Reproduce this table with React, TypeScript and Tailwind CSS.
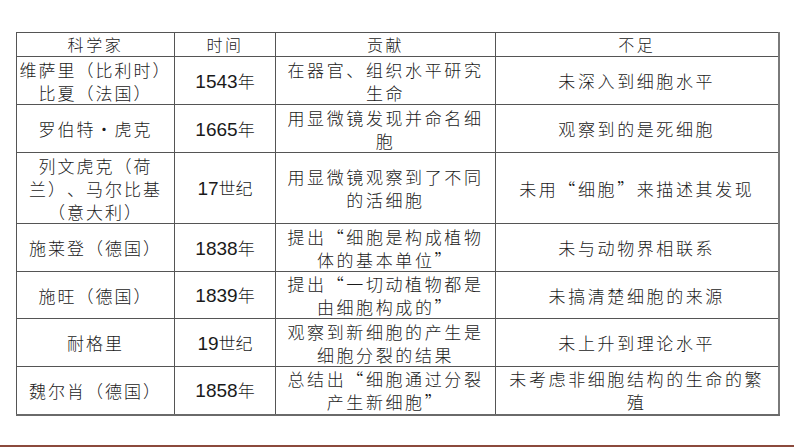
import React from "react";

type Row = {
  name: string[];
  year: [string, string];
  deed: string[];
  lack: string[];
  h: string;
};

const rows: Row[] = [
  { name: ["维萨里（比利时）", "比夏（法国）"], year: ["1543", "年"], deed: ["在器官、组织水平研究", "生命"], lack: ["未深入到细胞水平"], h: "h-[48px]" },
  { name: ["罗伯特·虎克"], year: ["1665", "年"], deed: ["用显微镜发现并命名细", "胞"], lack: ["观察到的是死细胞"], h: "h-[48px]" },
  { name: ["列文虎克（荷", "兰）、马尔比基", "（意大利）"], year: ["17", "世纪"], deed: ["用显微镜观察到了不同", "的活细胞"], lack: ["未用“细胞”来描述其发现"], h: "h-[71px]" },
  { name: ["施莱登（德国）"], year: ["1838", "年"], deed: ["提出“细胞是构成植物", "体的基本单位”"], lack: ["未与动物界相联系"], h: "h-[48px]" },
  { name: ["施旺（德国）"], year: ["1839", "年"], deed: ["提出“一切动植物都是", "由细胞构成的”"], lack: ["未搞清楚细胞的来源"], h: "h-[47px]" },
  { name: ["耐格里"], year: ["19", "世纪"], deed: ["观察到新细胞的产生是", "细胞分裂的结果"], lack: ["未上升到理论水平"], h: "h-[48px]" },
  { name: ["魏尔肖（德国）"], year: ["1858", "年"], deed: ["总结出“细胞通过分裂", "产生新细胞”"], lack: ["未考虑非细胞结构的生命的繁", "殖"], h: "h-[48px]" },
];

function Lines({ lines }: { lines: string[] }) {
  return (
    <>
      {lines.map((l, i) => (
        <div key={i} className="whitespace-nowrap">{l}</div>
      ))}
    </>
  );
}

const cell = "border border-[#555] text-center align-middle p-0 leading-[23px]";

export default function App() {
  return (
    <div className="w-[794px] h-[447px] bg-white flex flex-col text-[#1a1a1a] text-[17px] font-light tracking-[2.6px] [text-spacing-trim:space-all] font-['Noto_Sans_CJK_SC',sans-serif] overflow-hidden">
      <div className="pt-[32px] pl-[16px]">
        <table className="border-collapse table-fixed w-[762px]">
          <colgroup>
            <col className="w-[158px]" />
            <col className="w-[101px]" />
            <col className="w-[220px]" />
            <col className="w-[283px]" />
          </colgroup>
          <thead>
            <tr className="h-[24px]">
              <th className={`${cell} font-light text-[16px]`}>科学家</th>
              <th className={`${cell} font-light text-[16px]`}>时间</th>
              <th className={`${cell} font-light text-[16px]`}>贡献</th>
              <th className={`${cell} font-light text-[16px] border-r-2 border-r-[#7a7a7a]`}>不足</th>
            </tr>
          </thead>
          <tbody>
            {rows.map((r, i) => {
              const last = i === rows.length - 1;
              const bottom = last ? "border-b-2 border-b-[#6a6a6a]" : "";
              return (
                <tr key={i} className={r.h}>
                  <td className={`${cell} ${bottom} tracking-[2px]`}>
                    <Lines lines={r.name} />
                  </td>
                  <td className={`${cell} ${bottom}`}>
                    <span className="font-['Liberation_Sans','Noto_Sans_CJK_SC',sans-serif] font-normal text-[19px] tracking-normal">
                      {r.year[0]}
                    </span>
                    <span className="text-[17px] tracking-normal">{r.year[1]}</span>
                  </td>
                  <td className={`${cell} ${bottom}`}>
                    <Lines lines={r.deed} />
                  </td>
                  <td className={`${cell} border-r-2 border-r-[#7a7a7a] ${bottom}`}>
                    <Lines lines={r.lack} />
                  </td>
                </tr>
              );
            })}
          </tbody>
        </table>
      </div>
      <div className="flex-1" />
      <div className="h-[2px] bg-[#8b4a3c]" />
    </div>
  );
}
